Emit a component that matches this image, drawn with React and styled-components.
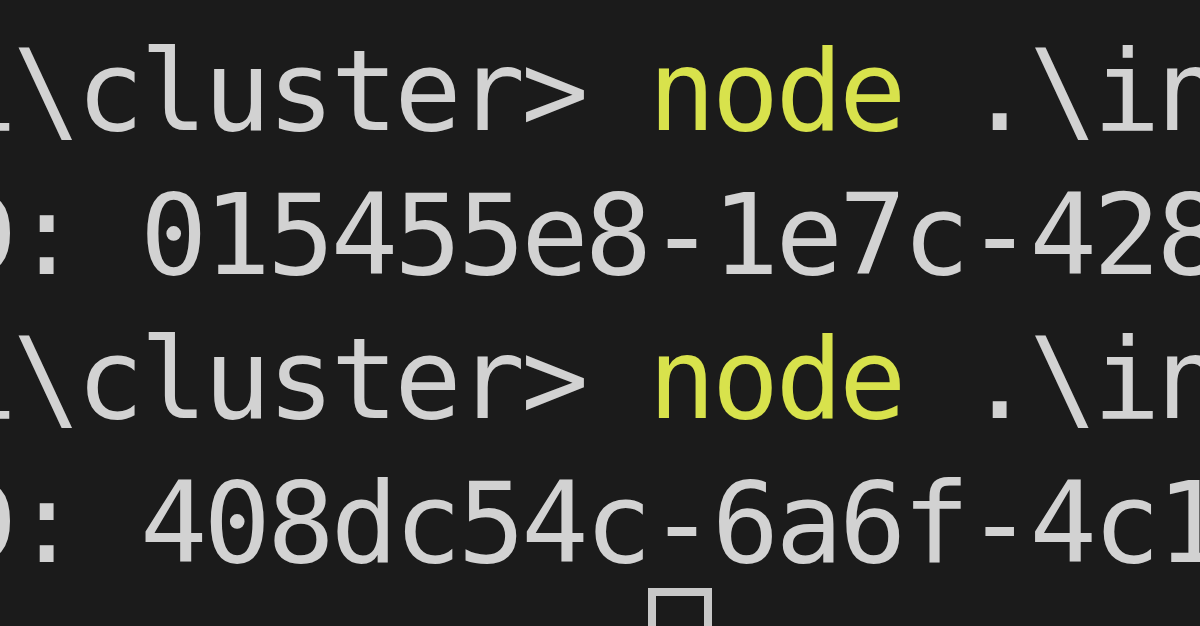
import React from "react";
import styled, { createGlobalStyle } from "styled-components";

const Global = createGlobalStyle`
  html, body { margin: 0; padding: 0; background: #1b1b1b; }
  #root { width: 1200px; height: 626px; }
`;

const Terminal = styled.div`
  width: 1200px;
  height: 626px;
  overflow: hidden;
  background: #1b1b1b;
  box-sizing: border-box;
  padding-top: 19px;
`;

const Screen = styled.div`
  margin-left: -50.5px;
  font-family: "DejaVu Sans Mono", "Liberation Mono", monospace;
  font-size: 112px;
  letter-spacing: -3.9px;
  line-height: 144px;
  color: #d2d2d2;
  white-space: pre;
`;

const Line = styled.div`
  height: 144px;
`;

const Cmd = styled.span`
  color: #d8e24c;
`;

const Cursor = styled.span`
  display: inline-block;
  width: 63.5px;
  height: 130px;
  box-sizing: border-box;
  border: 8px solid #c8c8c8;
  vertical-align: top;
  transform: translateY(-7px);
`;

const lines = [
  { prompt: "i\\cluster> ", cmd: "node", rest: " .\\index.js" },
  { out: "D: 015455e8-1e7c-4283-9a1b-7f0c2d3e4a5b" },
  { prompt: "i\\cluster> ", cmd: "node", rest: " .\\index.js" },
  { out: "D: 408dc54c-6a6f-4c1e-8b2d-3f4a5c6d7e8f" },
];

export default function App() {
  return (
    <>
      <Global />
      <Terminal>
        <Screen>
          {lines.map((l, i) => (
            <Line key={i}>
              {l.out ? (
                l.out
              ) : (
                <>
                  {l.prompt}
                  <Cmd>{l.cmd}</Cmd>
                  {l.rest}
                </>
              )}
            </Line>
          ))}
          <Line>
            {"           "}
            <Cursor />
          </Line>
        </Screen>
      </Terminal>
    </>
  );
}
